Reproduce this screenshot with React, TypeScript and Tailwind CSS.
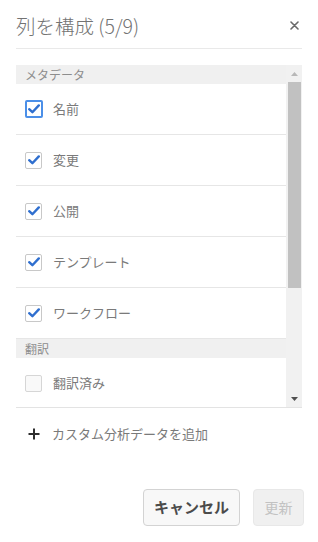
const rows = [
  { section: "メタデータ" },
  { label: "名前", checked: true, focused: true },
  { label: "変更", checked: true },
  { label: "公開", checked: true },
  { label: "テンプレート", checked: true },
  { label: "ワークフロー", checked: true },
  { section: "翻訳" },
  { label: "翻訳済み", checked: false },
];

function Checkbox({ checked, focused }: { checked: boolean; focused?: boolean }) {
  return (
    <div
      className={
        focused
          ? "w-[18px] h-[18px] border-2 border-[#4b8fe8] rounded-[2px] bg-white flex items-center justify-center"
          : checked
          ? "w-[17px] h-[17px] border border-[#c8c8c8] rounded-[2px] bg-white flex items-center justify-center"
          : "w-[17px] h-[17px] border border-[#d6d6d6] rounded-[2px] bg-[#f9f9f9]"
      }
    >
      {checked && (
        <svg width="12" height="10" viewBox="0 0 12 10">
          <path d="M1.2 5.2 L4.4 8.2 L10.8 1.4" fill="none" stroke="#2f6fcf" strokeWidth="2.4" strokeLinecap="round" strokeLinejoin="round" />
        </svg>
      )}
    </div>
  );
}

export default function App() {
  return (
    <div
      className="w-[318px] h-[542px] bg-white px-4 flex flex-col"
      style={{ fontFamily: '"Noto Sans CJK JP", "Noto Sans", sans-serif' }}
    >
      {/* header */}
      <div className="h-[49px] pt-[3px] border-b border-[#e9e9e9] flex items-center justify-between">
        <h1 className="text-[19.5px] font-light text-[#737373] leading-none">列を構成 (5/9)</h1>
        <svg width="9" height="9" viewBox="0 0 9 9" className="mr-[3px]">
          <path d="M1 1 L8 8 M8 1 L1 8" stroke="#6a6a6a" strokeWidth="1.6" strokeLinecap="round" />
        </svg>
      </div>

      {/* list */}
      <div className="mt-4 h-[343px] flex border-b border-[#e3e3e3]">
        <div className="flex-1 overflow-hidden">
          {rows.map((r, i) =>
            r.section ? (
              <div key={i} className="h-[19px] bg-[#f0f0f0] px-[9px] flex items-center text-[12px] text-[#8d8d8d]">
                {r.section}
              </div>
            ) : (
              <div key={i} className="h-[51px] border-b border-[#e6e6e6] pl-[9px] flex items-center gap-[10px]">
                <div className="w-[18px] flex items-center">
                  <Checkbox checked={!!r.checked} focused={r.focused} />
                </div>
                <span className="text-[13px] text-[#7a7a7a]">{r.label}</span>
              </div>
            )
          )}
        </div>
        {/* scrollbar */}
        <div className="w-4 bg-[#f1f1f1] flex flex-col">
          <div className="h-[17px] flex items-center justify-center">
            <svg width="7" height="4" viewBox="0 0 7 4">
              <path d="M0 4 L3.5 0 L7 4 Z" fill="#b8b8b8" />
            </svg>
          </div>
          <div className="h-[206px] ml-[2px] mr-px bg-[#c1c1c1]" />
          <div className="flex-1" />
          <div className="h-[17px] flex items-center justify-center">
            <svg width="7" height="4" viewBox="0 0 7 4">
              <path d="M0 0 L7 0 L3.5 4 Z" fill="#505050" />
            </svg>
          </div>
        </div>
      </div>

      {/* add custom */}
      <div className="h-[52px] pl-3 flex items-center gap-[12px]">
        <svg width="12" height="12" viewBox="0 0 12 12">
          <path d="M6 0.5 V11.5 M0.5 6 H11.5" stroke="#2e2e2e" strokeWidth="2" />
        </svg>
        <span className="text-[13px] text-[#7a7a7a]">カスタム分析データを追加</span>
      </div>

      {/* footer */}
      <div className="mt-[29px] -mr-[2px] flex justify-end gap-[13px]">
        <button className="h-[37px] w-[97px] rounded-[4px] border border-[#d3d3d3] bg-[#f8f8f8] text-[15px] font-bold text-[#4b4b4b]">
          キャンセル
        </button>
        <button className="h-[37px] w-[51px] rounded-[4px] border border-[#e8e8e8] bg-[#f0f0f0] text-[14px] text-[#c2c2c2]">
          更新
        </button>
      </div>
    </div>
  );
}
